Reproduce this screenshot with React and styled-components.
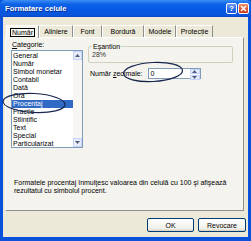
import React from 'react';
import styled, { createGlobalStyle } from 'styled-components';

const GlobalStyle = createGlobalStyle`
	html, body {
		margin: 0;
		padding: 0;
		background: #ffffff;
	}
	* {
		box-sizing: border-box;
	}
`;

const font = `"Liberation Sans", Arial, sans-serif`;

const Window = styled.div`
	width: 251px;
	height: 241px;
	display: flex;
	flex-direction: column;
	background: #0a52dc;
	padding: 0 3px 4px 3px;
	font-family: ${font};
	font-size: 7px;
	color: #000;
	position: relative;
	overflow: hidden;
`;

const TitleBar = styled.div`
	height: 17px;
	margin: 0 -3px;
	padding: 0 2px 0 5px;
	display: flex;
	align-items: center;
	background: linear-gradient(to bottom, #3d8ef5 0%, #0d62e6 25%, #0458e4 60%, #0a55da 90%, #0846c4 100%);
	border-radius: 5px 5px 0 0;
`;

const Title = styled.span`
	flex-grow: 1;
	color: #ffffff;
	font-weight: bold;
	font-size: 7.7px;
	text-shadow: 1px 1px 0 #0a2c8a;
`;

const CaptionButton = styled.div`
	width: 11px;
	height: 11px;
	margin-left: 1px;
	border: 1px solid #ffffff;
	border-radius: 2px;
	display: flex;
	align-items: center;
	justify-content: center;
	color: #ffffff;
	font-weight: bold;
	font-size: 8px;
	background: ${p => p.close
		? 'linear-gradient(to bottom, #f0936e, #e1522a 60%, #c8391a)'
		: 'linear-gradient(to bottom, #6d9ef5, #2b6ce8 60%, #1e58d6)'};
`;

const Body = styled.div`
	flex-grow: 1;
	background: #ece9d8;
	display: flex;
	flex-direction: column;
	padding: 7px 4px 0 2px;
`;

const TabStrip = styled.div`
	display: flex;
	height: 13px;
	padding-left: 1px;
	align-items: flex-end;
`;

const Tab = styled.div`
	width: ${p => p.w}px;
	height: ${p => (p.active ? '13px' : '12px')};
	display: flex;
	align-items: center;
	justify-content: center;
	border-top: 1px solid #ffffff;
	border-left: 1px solid #ffffff;
	border-right: 1px solid #8e8f8f;
	background: ${p => (p.active ? '#f7f6f0' : '#ece9d8')};
	margin-bottom: ${p => (p.active ? '-1px' : '0')};
	position: relative;
	z-index: ${p => (p.active ? 1 : 0)};
`;

const TabLabel = styled.span`
	padding: 0 1px;
	border: 1px solid ${p => (p.focus ? '#000' : 'transparent')};
	line-height: 7px;
	white-space: nowrap;
`;

const Panel = styled.div`
	height: 174px;
	border-top: 1px solid #ffffff;
	border-left: 1px solid #ffffff;
	border-right: 1px solid #8e8f8f;
	border-bottom: 1px solid #8e8f8f;
	background: #f4f3ee;
	display: flex;
	flex-direction: column;
	padding: 2px 0 0 5px;
	position: relative;
`;

const Columns = styled.div`
	display: flex;
	gap: 5px;
`;

const LeftColumn = styled.div`
	display: flex;
	flex-direction: column;
	width: 72px;
`;

const Label = styled.div`
	line-height: 9px;
	height: 10px;
	padding-left: 1px;
`;

const ListBox = styled.div`
	width: 72px;
	height: 98px;
	border: 1px solid #7f9db9;
	background: #ffffff;
	display: flex;
`;

const Items = styled.div`
	flex-grow: 1;
	padding-top: 1px;
`;

const Item = styled.div`
	height: 8px;
	line-height: 8px;
	padding-left: 1px;
	white-space: nowrap;
	background: ${p => (p.selected ? '#316ac5' : 'transparent')};
	color: ${p => (p.selected ? '#ffffff' : '#000')};
`;

const ScrollBar = styled.div`
	width: 9px;
	display: flex;
	flex-direction: column;
	justify-content: space-between;
	background: #f7f6f2;
`;

const ScrollButton = styled.div`
	height: 9px;
	background: #e8ecf4;
	border: 1px solid #c3d3fd;
	display: flex;
	align-items: center;
	justify-content: center;
`;

const RightColumn = styled.div`
	flex-grow: 1;
	display: flex;
	flex-direction: column;
	padding-right: 10px;
`;

const GroupBox = styled.fieldset`
	margin: 3px 0 0 0;
	padding: 1px 3px 2px 3px;
	border: 1px solid #d0d0bf;
	border-radius: 2px;
	height: 20px;
`;

const Legend = styled.legend`
	padding: 0 1px;
	margin-left: 0;
	line-height: 7px;
`;

const Sample = styled.div`
	line-height: 8px;
	color: #333;
`;

const DecimalsRow = styled.div`
	display: flex;
	align-items: center;
	margin-top: 5px;
	padding-left: 2px;
	gap: 5px;
`;

const Input = styled.div`
	width: 53px;
	height: 11px;
	border: 1px solid #7f9db9;
	background: #ffffff;
	display: flex;
	align-items: center;
	padding-left: 2px;
	justify-content: space-between;
`;

const Spinner = styled.div`
	width: 10px;
	height: 9px;
	display: flex;
	flex-direction: column;
	gap: 1px;
`;

const SpinButton = styled.div`
	flex-grow: 1;
	background: #e8ecf4;
	border: 1px solid #c3d3fd;
	display: flex;
	align-items: center;
	justify-content: center;
`;

const Description = styled.div`
	margin-top: 31px;
	padding-left: 3px;
	line-height: 7.5px;
	white-space: nowrap;
`;

const Footer = styled.div`
	display: flex;
	justify-content: flex-end;
	gap: 4px;
	padding: 7px 0 0 0;
	margin-right: -2px;
`;

const Button = styled.div`
	width: ${p => p.w}px;
	height: 14px;
	border: 1px solid #003c74;
	border-radius: 2px;
	background: linear-gradient(to bottom, #ffffff, #f0f0ea 80%, #d6d0c5);
	display: flex;
	align-items: center;
	justify-content: center;
`;

const Mark = styled.svg`
	position: absolute;
	left: 0;
	top: 0;
	pointer-events: none;
	overflow: visible;
`;

const Arrow = ({ up }) => (
	<svg width="5" height="3" viewBox="0 0 5 3">
		<path d={up ? 'M0 3 L2.5 0 L5 3 Z' : 'M0 0 L2.5 3 L5 0 Z'} fill="#4d6185" />
	</svg>
);

const categories = [
	'General', 'Număr', 'Simbol monetar', 'Contabil', 'Dată', 'Oră',
	'Procentaj', 'Fracție', 'Științific', 'Text', 'Special', 'Particularizat',
];

const tabs = [
	{ name: 'Număr', w: 33, active: true },
	{ name: 'Aliniere', w: 34 },
	{ name: 'Font', w: 29 },
	{ name: 'Bordură', w: 42 },
	{ name: 'Modele', w: 32 },
	{ name: 'Protecție', w: 37 },
];

const App = () => {
	return (
		<>
			<GlobalStyle />
			<Window>
				<TitleBar>
					<Title>Formatare celule</Title>
					<CaptionButton>?</CaptionButton>
					<CaptionButton close>
						<svg width="7" height="7" viewBox="0 0 7 7">
							<path d="M1 1 L6 6 M6 1 L1 6" stroke="#fff" strokeWidth="1.5" />
						</svg>
					</CaptionButton>
				</TitleBar>
				<Body>
					<TabStrip>
						{tabs.map(t => (
							<Tab key={t.name} active={t.active} w={t.w}>
								<TabLabel focus={t.active}>{t.name}</TabLabel>
							</Tab>
						))}
					</TabStrip>
					<Panel>
						<Columns>
							<LeftColumn>
								<Label><u>C</u>ategorie:</Label>
								<ListBox>
									<Items>
										{categories.map(c => (
											<Item key={c} selected={c === 'Procentaj'}>{c}</Item>
										))}
									</Items>
									<ScrollBar>
										<ScrollButton><Arrow up /></ScrollButton>
										<ScrollButton><Arrow /></ScrollButton>
									</ScrollBar>
								</ListBox>
							</LeftColumn>
							<RightColumn>
								<GroupBox>
									<Legend>Eşantion</Legend>
									<Sample>28%</Sample>
								</GroupBox>
								<DecimalsRow>
									<span>Număr <u>z</u>ecimale:</span>
									<Input>
										<span>0</span>
										<Spinner>
											<SpinButton><Arrow up /></SpinButton>
											<SpinButton><Arrow /></SpinButton>
										</Spinner>
									</Input>
								</DecimalsRow>
							</RightColumn>
						</Columns>
						<Description>
							Formatele procentaj înmulţesc valoarea din celulă cu 100 şi afişează<br />
							rezultatul cu simbolul procent.
						</Description>
					</Panel>
					<Footer>
						<Button w={47}>OK</Button>
						<Button w={48}>Revocare</Button>
					</Footer>
				</Body>
				<Mark width="251" height="241">
					<ellipse cx="34" cy="103" rx="31" ry="9.5" fill="none" stroke="#17264f" strokeWidth="1.2" transform="rotate(3 34 103)" />
					<ellipse cx="153" cy="72" rx="29.5" ry="9.5" fill="none" stroke="#17264f" strokeWidth="1.2" transform="rotate(-3 153 72)" />
				</Mark>
			</Window>
		</>
	);
};

export default App;
